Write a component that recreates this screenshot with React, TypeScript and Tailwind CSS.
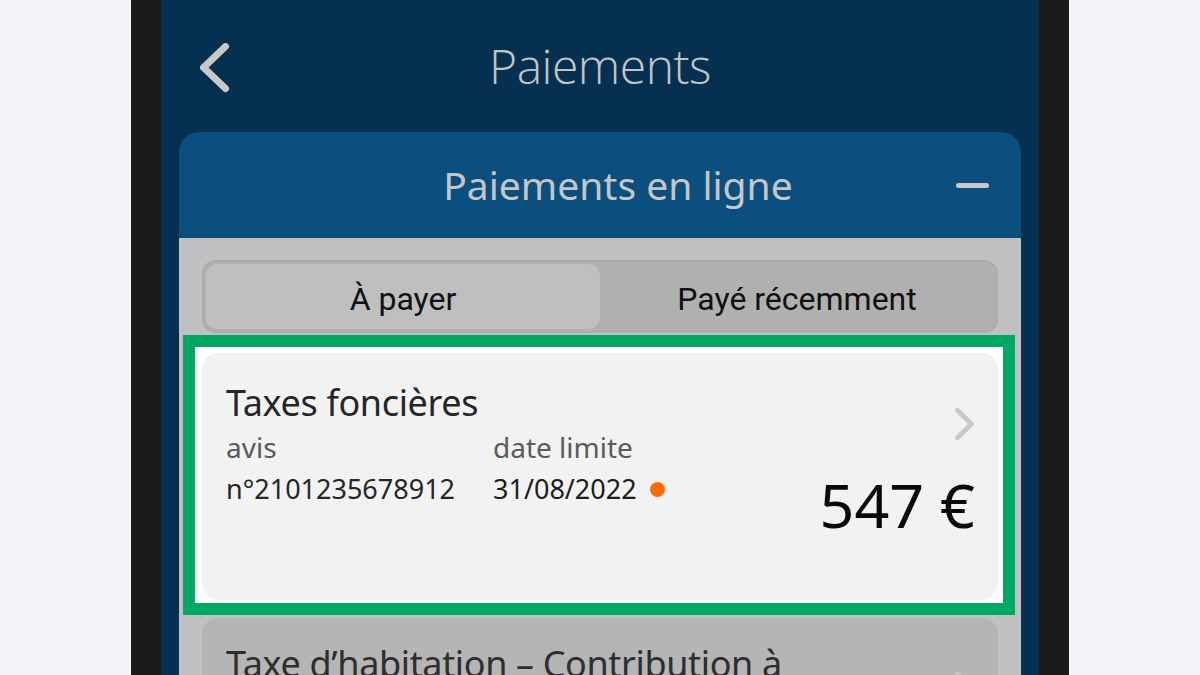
import React from 'react';

const sans = "font-['Noto_Sans','Open_Sans',sans-serif]";

function BackIcon() {
  return (
    <svg width="30" height="50" viewBox="0 0 30 50" fill="none">
      <polyline points="25.5,3.5 3.5,24.5 25.5,45.5" stroke="#c8c8c8" strokeWidth="7" strokeLinecap="round" strokeLinejoin="round" />
    </svg>
  );
}

function ChevronRight({ color = '#c9c9c9' }: { color?: string }) {
  return (
    <svg width="20" height="32" viewBox="0 0 20 32" fill="none">
      <polyline points="2.5,2.5 16.5,16 2.5,29.5" stroke={color} strokeWidth="5" strokeLinecap="round" strokeLinejoin="round" />
    </svg>
  );
}

export default function App() {
  return (
    <div className={`w-[1200px] h-[675px] bg-[#f3f4f8] flex justify-center overflow-hidden ${sans}`}>
      {/* phone frame */}
      <div className="w-[938px] h-full bg-[#1b1b1b] px-[30px]">
        <div className="h-full bg-[#05304f] flex flex-col">
          {/* top bar */}
          <div className="relative h-[132px] shrink-0 flex items-center justify-center">
            <div className="absolute left-[39px] top-[43px]">
              <BackIcon />
            </div>
            <h1 className="font-['Open_Sans',sans-serif] text-[48px] leading-[56px] font-light text-[#c4c4c4] tracking-[-0.01em]">Paiements</h1>
          </div>

          {/* accordion */}
          <div className="mx-[18px] rounded-t-[20px] overflow-hidden flex-1 flex flex-col">
            <div className="relative h-[106px] shrink-0 bg-[#0a4f7d] flex items-center justify-center pl-[36px]">
              <span className="text-[39px] leading-[48px] text-[#c6c6c6]">Paiements en ligne</span>
              <span className="absolute right-[32px] top-[51px] w-[33px] h-[5px] rounded-full bg-[#c8c8c8]" />
            </div>

            <div className="flex-1 bg-[#c0c0c0] pl-[23px] pr-[23px] pt-[22px]">
              {/* segmented control */}
              <div className="h-[73px] rounded-[14px] bg-[#b0b0b0] border-2 border-[#ababab] p-[2px] flex font-['Roboto',sans-serif] text-[32px] text-[#111]">
                <div className="flex-1 rounded-[12px] bg-[#bfbfbf] flex items-center justify-center pt-[5px]">À payer</div>
                <div className="flex-1 flex items-center justify-center pt-[5px]">Payé récemment</div>
              </div>

              {/* highlighted item */}
              <div className="mt-[2px] -ml-[19px] -mr-[17px] border-[12px] border-[#00a862] bg-white pt-[6px] pl-[7px] pr-[5px] pb-[3px]">
                <div className="h-[247px] rounded-[16px] bg-[#f2f2f2] flex pl-[24px] pr-[23px]">
                  <div className="flex-1 pt-[28px]">
                    <div className="text-[36px] leading-[44px] text-[#262626] tracking-[-0.01em]">Taxes foncières</div>
                    <div className="mt-[5px] grid grid-cols-[267px_1fr]">
                      <div className="text-[28px] leading-[34px] text-[#5a5a5a]">avis</div>
                      <div className="text-[28px] leading-[34px] text-[#5a5a5a]">date limite</div>
                      <div className="mt-[8px] text-[27px] leading-[34px] text-[#262626]">n°2101235678912</div>
                      <div className="mt-[8px] text-[27px] leading-[34px] text-[#1c1c1c] flex items-center gap-[13px]">
                        31/08/2022
                        <span className="w-[15px] h-[15px] rounded-full bg-[#ff6a00]" />
                      </div>
                    </div>
                  </div>
                  <div className="flex flex-col items-end pt-[55px]">
                    <ChevronRight />
                    <div className="mt-[34px] text-[61px] leading-[61px] text-[#0a0a0a]">547 €</div>
                  </div>
                </div>
              </div>

              {/* next item */}
              <div className="mt-[3px] h-[120px] rounded-t-[16px] bg-[#b5b5b5] flex pl-[24px] pr-[23px] pt-[24px]">
                <div className="flex-1 text-[36px] leading-[44px] text-[#2e2e2e] tracking-[-0.01em]">Taxe d’habitation – Contribution à</div>
                <div className="pt-[30px]">
                  <ChevronRight color="#c4c4c4" />
                </div>
              </div>
            </div>
          </div>
        </div>
      </div>
    </div>
  );
}
